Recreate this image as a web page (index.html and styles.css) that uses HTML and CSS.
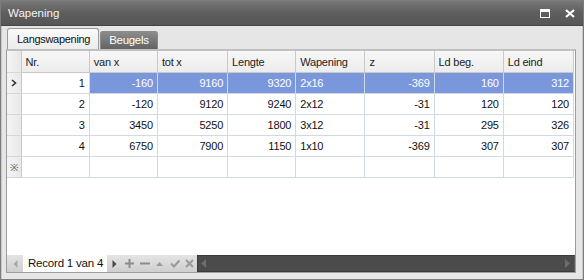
FILE: index.html
```html
<!DOCTYPE html>
<html lang="nl">
<head>
    <meta charset="UTF-8">
    <title>Wapening</title>
    <link rel="stylesheet" href="styles.css">
</head>
<body>
    <div class="window">
        <div class="titlebar">
            <span class="title">Wapening</span>
            <div class="controls">
                <svg width="10" height="9" viewBox="0 0 10 9"><rect x="0.5" y="0.5" width="9" height="8" fill="none" stroke="#fff"/><rect x="0" y="0" width="10" height="3" fill="#fff"/></svg>
                <svg width="10" height="9" viewBox="0 0 10 9"><path d="M1 1 L9 8 M9 1 L1 8" stroke="#fff" stroke-width="2.2"/></svg>
            </div>
        </div>
        <div class="content">
            <div class="tabs">
                <div class="tab active">Langswapening</div>
                <div class="tab">Beugels</div>
            </div>
            <div class="grid">
                <table>
                    <colgroup>
                        <col class="c-ind">
                        <col class="c-68">
                        <col class="c-68">
                        <col class="c-70">
                        <col class="c-68">
                        <col class="c-69">
                        <col class="c-69">
                        <col class="c-69">
                        <col class="c-last">
                    </colgroup>
                    <thead>
                        <tr>
                            <th class="ind"></th>
                            <th>Nr.</th>
                            <th>van x</th>
                            <th>tot x</th>
                            <th>Lengte</th>
                            <th>Wapening</th>
                            <th>z</th>
                            <th>Ld beg.</th>
                            <th>Ld eind</th>
                        </tr>
                    </thead>
                    <tbody>
                        <tr class="selected">
                            <td class="ind"><svg width="6" height="8" viewBox="0 0 6 8"><path d="M1 1 L4.5 4 L1 7" fill="none" stroke="#333" stroke-width="1.6"/></svg></td>
                            <td class="num cur">1</td>
                            <td class="num">-160</td>
                            <td class="num">9160</td>
                            <td class="num">9320</td>
                            <td>2x16</td>
                            <td class="num">-369</td>
                            <td class="num">160</td>
                            <td class="num">312</td>
                        </tr>
                        <tr>
                            <td class="ind"></td>
                            <td class="num">2</td>
                            <td class="num">-120</td>
                            <td class="num">9120</td>
                            <td class="num">9240</td>
                            <td>2x12</td>
                            <td class="num">-31</td>
                            <td class="num">120</td>
                            <td class="num">120</td>
                        </tr>
                        <tr>
                            <td class="ind"></td>
                            <td class="num">3</td>
                            <td class="num">3450</td>
                            <td class="num">5250</td>
                            <td class="num">1800</td>
                            <td>3x12</td>
                            <td class="num">-31</td>
                            <td class="num">295</td>
                            <td class="num">326</td>
                        </tr>
                        <tr>
                            <td class="ind"></td>
                            <td class="num">4</td>
                            <td class="num">6750</td>
                            <td class="num">7900</td>
                            <td class="num">1150</td>
                            <td>1x10</td>
                            <td class="num">-369</td>
                            <td class="num">307</td>
                            <td class="num">307</td>
                        </tr>
                        <tr class="newrow">
                            <td class="ind">&#8251;</td>
                            <td></td><td></td><td></td><td></td><td></td><td></td><td></td><td></td>
                        </tr>
                    </tbody>
                </table>
                <div class="filler"></div>
                <div class="navbar">
                    <div class="nav-left">
                        <span class="nb first"><svg width="5" height="8" viewBox="0 0 5 8"><path d="M4.5 0 L0.5 4 L4.5 8 Z" fill="#a8a8a8"/></svg></span>
                        <span class="record">Record 1 van 4</span>
                        <span class="nb"><svg width="5" height="8" viewBox="0 0 5 8"><path d="M0.5 0 L4.5 4 L0.5 8 Z" fill="#4a4a4a"/></svg></span>
                        <span class="nb"><svg width="9" height="9" viewBox="0 0 9 9"><path d="M4.5 0 V9 M0 4.5 H9" stroke="#8c8c8c" stroke-width="2"/></svg></span>
                        <span class="nb"><svg width="10" height="9" viewBox="0 0 10 9"><path d="M0 4.5 H10" stroke="#8c8c8c" stroke-width="2"/></svg></span>
                        <span class="nb"><svg width="7" height="5" viewBox="0 0 7 5"><path d="M0 5 L3.5 1 L7 5 Z" fill="#9a9a9a"/></svg></span>
                        <span class="nb"><svg width="10" height="9" viewBox="0 0 10 9"><path d="M1 4.5 L4 7.5 L9.5 1.5" fill="none" stroke="#9a9a9a" stroke-width="2"/></svg></span>
                        <span class="nb"><svg width="9" height="9" viewBox="0 0 9 9"><path d="M1 1 L8 8 M8 1 L1 8" stroke="#9a9a9a" stroke-width="2"/></svg></span>
                    </div>
                    <div class="hscroll">
                        <svg width="5" height="9" viewBox="0 0 5 9"><path d="M5 0 L0 4.5 L5 9 Z" fill="#6c6c6c"/></svg>
                        <svg width="5" height="9" viewBox="0 0 5 9"><path d="M0 0 L5 4.5 L0 9 Z" fill="#6c6c6c"/></svg>
                    </div>
                </div>
            </div>
        </div>
    </div>
</body>
</html>
```

FILE: styles.css
```css
html, body {
    margin: 0;
    padding: 0;
}
body {
    width: 584px;
    height: 280px;
    overflow: hidden;
    font-family: 'Liberation Sans', Arial, sans-serif;
    font-size: 11px;
    background: #d4d4d4;
}
.window {
    width: 584px;
    height: 280px;
    box-sizing: border-box;
    border: 1px solid #7c7c7c;
    background: #e6e6e6;
    display: flex;
    flex-direction: column;
}
.titlebar {
    height: 24px;
    flex: none;
    background: linear-gradient(#777, #5e5e5e 50%, #565656);
    border-bottom: 1px solid #444;
    display: flex;
    align-items: center;
    justify-content: space-between;
    padding: 0 8px 0 7px;
    color: #f4f4f4;
}
.title {
    font-size: 11.5px;
}
.controls {
    display: flex;
    gap: 15px;
    margin-top: 1px;
}
.content {
    flex: 1;
    display: flex;
    flex-direction: column;
    padding: 3px 6px 6px 4px;
    border-left: 1px solid #c8c8c8;
    border-right: 1px solid #c8c8c8;
}
.tabs {
    display: flex;
    align-items: flex-end;
    height: 20px;
    padding-left: 1px;
    gap: 1px;
}
.tab {
    font-size: 11.5px;
    letter-spacing: -0.3px;
    height: 17px;
    line-height: 17px;
    padding: 0 8px;
    border: 1px solid #8a8a8a;
    border-bottom: none;
    border-radius: 3px 3px 0 0;
    background: linear-gradient(#8c8c8c, #626262);
    color: #fff;
}
.tab.active {
    font-size: 11px;
    height: 20px;
    line-height: 20px;
    padding: 0 8px 0 9px;
    background: linear-gradient(#fafafa, #ececec);
    color: #111;
    border-color: #9a9a9a;
}
.grid {
    flex: 1;
    display: flex;
    flex-direction: column;
    border: 1px solid #9c9c9c;
    border-top: 2px solid #c0c0c0;
    background: #fff;
}
table {
    border-collapse: collapse;
    table-layout: fixed;
    width: 567px;
    font-size: 11px;
    letter-spacing: -0.2px;
}
col.c-ind { width: 14px; }
col.c-68 { width: 68px; }
col.c-70 { width: 70px; }
col.c-69 { width: 69px; }
col.c-last { width: 70px; }
th {
    height: 21px;
    padding: 0 4px;
    text-align: left;
    font-weight: normal;
    color: #222;
    background: linear-gradient(#f7f7f7, #ececec);
    border-right: 1px solid #c9c9c9;
    border-bottom: 1px solid #c9c9c9;
    overflow: hidden;
}
th.ind, td.ind {
    padding: 0;
    background: linear-gradient(to right, #f4f4f4, #e8e8e8);
    border-right: 1px solid #c9c9c9;
    border-bottom: 1px solid #d6d6d6;
}
td.ind {
    text-align: center;
    color: #555;
    font-size: 10px;
}
td.ind svg {
    display: block;
    margin: 0 auto;
}
td {
    height: 20px;
    padding: 0 4px;
    border-right: 1px solid #d3d9e3;
    border-bottom: 1px solid #d3d9e3;
    color: #111;
    white-space: nowrap;
    overflow: hidden;
}
td.num {
    text-align: right;
}
tr.selected td {
    background: #7b97dc;
    color: #fff;
}
tr.selected td.cur {
    background: #fff;
    color: #111;
}
tr.selected td.ind {
    background: linear-gradient(to right, #f4f4f4, #e8e8e8);
}
.filler {
    flex: 1;
}
.navbar {
    height: 17px;
    display: flex;
    background: linear-gradient(#e4e4e4, #cfcfcf);
}
.nav-left {
    display: flex;
    align-items: center;
    width: 190px;
    flex: none;
}
.nb {
    width: 15px;
    height: 17px;
    display: flex;
    align-items: center;
    justify-content: center;
}
.nb.first {
    width: 16px;
}
.record {
    width: 84px;
    box-sizing: border-box;
    background: #fff;
    height: 17px;
    line-height: 17px;
    padding-left: 5px;
    font-size: 11.5px;
    letter-spacing: -0.2px;
    color: #111;
    white-space: nowrap;
}
.hscroll {
    flex: 1;
    display: flex;
    justify-content: space-between;
    align-items: center;
    background: #4b4b4b;
    border: 1px solid #3a3a3a;
    border-right-color: #5a5a5a;
    padding: 0 4px 0 3px;
}
```
